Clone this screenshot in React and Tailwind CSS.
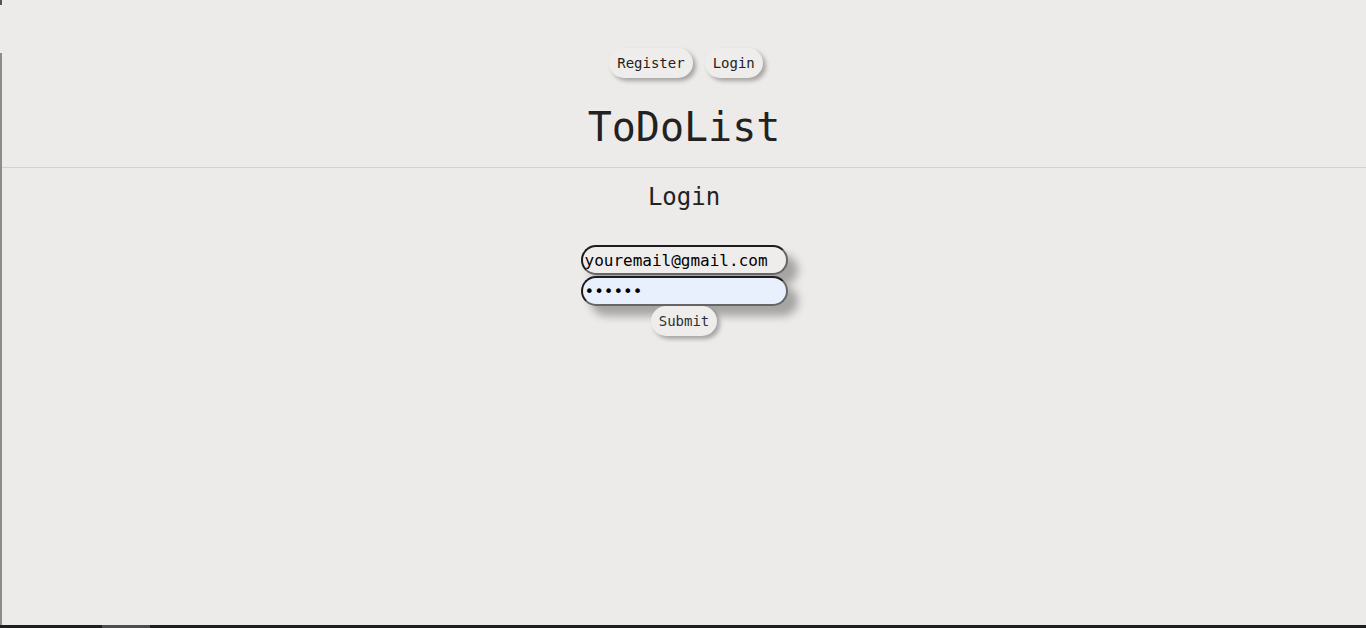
import React from 'react';

const mono = { fontFamily: '"DejaVu Sans Mono", "Liberation Mono", monospace' };

function PillButton({ children }) {
  return (
    <button
      type="button"
      className="h-[30px] px-2 rounded-full bg-[#efedeb] text-[14px] text-[#222] shadow-[3px_3px_4px_rgba(0,0,0,0.3)]"
      style={mono}
    >
      {children}
    </button>
  );
}

export default function App() {
  return (
    <div className="h-[628px] flex flex-col bg-[#edebe9] text-[#222] overflow-hidden" style={mono}>
      <div className="flex-1 flex min-h-0">
        {/* window edge */}
        <div className="w-[2px] flex flex-col">
          <div className="h-[5px] bg-[#555]" />
          <div className="h-[48px]" />
          <div className="flex-1 bg-[#8c8c8c]" />
        </div>

        <div className="flex-1 flex flex-col">
          {/* Header */}
          <header className="pt-[48px] pb-[17px] border-b border-[#d3d1cf] flex flex-col items-center">
            <nav className="flex gap-3 pl-[4px]">
              <PillButton>Register</PillButton>
              <PillButton>Login</PillButton>
            </nav>
            <h1 className="mt-[26px] text-[40px] leading-[46px] font-normal">ToDoList</h1>
          </header>

          {/* Login form */}
          <main className="flex flex-col items-center">
            <h2 className="mt-[15px] text-[24px] leading-[28px] font-normal">Login</h2>
            <form className="mt-[34px] flex flex-col items-center" onSubmit={e => e.preventDefault()}>
              <input
                type="email"
                defaultValue="youremail@gmail.com"
                className="w-[207px] h-[30px] px-[2px] rounded-full bg-[#efedeb] text-[16px] text-black border-2 border-t-[#1c1c1c] border-l-[#1c1c1c] border-b-[#666] border-r-[#666] shadow-[10px_10px_8px_rgba(0,0,0,0.3)] outline-none"
                style={mono}
              />
              <input
                type="password"
                defaultValue="123456"
                className="mt-px w-[207px] h-[30px] px-[2px] rounded-full bg-[#e8f0fe] text-[16px] text-black border-2 border-t-[#1c1c1c] border-l-[#1c1c1c] border-b-[#666] border-r-[#666] shadow-[10px_10px_8px_rgba(0,0,0,0.3)] outline-none"
                style={mono}
              />
              <button
                type="submit"
                className="h-[30px] px-2 rounded-full bg-[#efedeb] text-[14px] text-[#2a2f3a] shadow-[3px_3px_4px_rgba(0,0,0,0.3)]"
                style={mono}
              >
                Submit
              </button>
            </form>
          </main>
        </div>
      </div>

      {/* bottom scrollbar strip */}
      <div className="h-[3px] bg-[#1e1e1e] flex">
        <div className="ml-[102px] w-[48px] bg-[#4d4d4d]" />
      </div>
    </div>
  );
}
